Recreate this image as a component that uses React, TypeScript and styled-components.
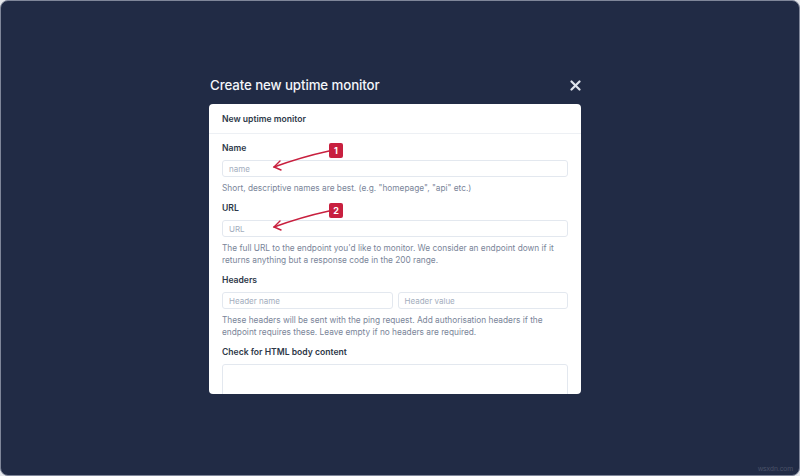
import React from "react";
import styled, { createGlobalStyle } from "styled-components";

const Global = createGlobalStyle`
  html, body { margin: 0; padding: 0; background: #e6e8ec; }
  body { font-family: "Inter", "Liberation Sans", sans-serif; }
  * { box-sizing: border-box; }
`;

const Screen = styled.div`
  position: relative;
  width: 800px;
  height: 476px;
  background: #212b45;
  border: 1px solid #7f8699;
  border-radius: 8px;
  overflow: hidden;
  display: flex;
  justify-content: center;
`;

const Modal = styled.div`
  width: 372px;
  margin-left: -10px;
  padding-top: 73px;
  display: flex;
  flex-direction: column;
`;

const TitleRow = styled.div`
  display: flex;
  align-items: center;
  justify-content: space-between;
  height: 22px;
  margin-bottom: 8px;
  padding-left: 1px;
`;

const Title = styled.h1`
  margin: 0;
  font-size: 13.3px;
  font-weight: 500;
  color: #f4f6fa;
  letter-spacing: -0.1px;
`;

const Close = styled.button`
  border: 0;
  background: none;
  padding: 0;
  width: 11px;
  height: 11px;
  display: flex;
`;

const Card = styled.div`
  position: relative;
  height: 290px;
  background: #ffffff;
  border-radius: 4px;
  overflow: hidden;
`;

const CardHeader = styled.div`
  height: 30px;
  display: flex;
  align-items: center;
  padding: 0 13px;
  border-bottom: 1px solid #edf0f4;
  font-size: 8.6px;
  font-weight: 600;
  color: #2d3748;
`;

const CardBody = styled.div`
  padding: 9px 13px 0;
`;

const Field = styled.div`
  margin-bottom: 9px;
`;

const Label = styled.div`
  font-size: 8.6px;
  line-height: 11px;
  font-weight: 600;
  color: #2d3748;
  margin-bottom: 6px;
`;

const Input = styled.div`
  height: 17px;
  border: 1px solid #e3e8ef;
  border-radius: 3px;
  padding-left: 6px;
  display: flex;
  align-items: center;
  font-size: 8px;
  color: #a3adbd;
  flex: 1;
`;

const TextArea = styled.div`
  height: 60px;
  border: 1px solid #e3e8ef;
  border-radius: 3px;
`;

const Pair = styled.div`
  display: flex;
  gap: 5px;
`;

const Help = styled.p`
  margin: 5px 0 0;
  font-size: 8.3px;
  line-height: 12px;
  color: #7a8599;
`;

const Badge = styled.div<{ $top: number }>`
  position: absolute;
  left: 120px;
  top: ${(p) => p.$top}px;
  width: 14px;
  height: 15px;
  border-radius: 2px;
  background: #c8203f;
  color: #fff;
  font-size: 9px;
  font-weight: 700;
  display: flex;
  align-items: center;
  justify-content: center;
`;

const Arrows = styled.svg`
  position: absolute;
  left: 0;
  top: 0;
  pointer-events: none;
`;

const Watermark = styled.div`
  position: absolute;
  right: 6px;
  bottom: 3px;
  font-size: 7px;
  color: #4a5268;
  font-family: "Liberation Sans", sans-serif;
`;

function Arrow({ y }: { y: number }) {
  const sx = 120;
  const sy = y + 8;
  const tx = 65;
  const ty = y + 24;
  return (
    <g stroke="#c8203f" strokeWidth={1.4} fill="none" strokeLinecap="round">
      <path d={`M ${sx} ${sy} Q ${(sx + tx) / 2} ${(sy + ty) / 2 - 2} ${tx} ${ty}`} />
      <path d={`M ${tx + 6} ${ty - 6} L ${tx} ${ty} L ${tx + 7} ${ty + 3}`} />
    </g>
  );
}

export default function App() {
  return (
    <>
      <Global />
      <Screen>
        <Modal>
          <TitleRow>
            <Title>Create new uptime monitor</Title>
            <Close aria-label="close">
              <svg width="11" height="11" viewBox="0 0 11 11">
                <path d="M1.5 1.5 L9.5 9.5 M9.5 1.5 L1.5 9.5" stroke="#dfe4ec" strokeWidth="2.2" strokeLinecap="round" />
              </svg>
            </Close>
          </TitleRow>
          <Card>
            <CardHeader>New uptime monitor</CardHeader>
            <CardBody>
              <Field>
                <Label>Name</Label>
                <Input>name</Input>
                <Help>Short, descriptive names are best. (e.g. "homepage", "api" etc.)</Help>
              </Field>
              <Field>
                <Label>URL</Label>
                <Input>URL</Input>
                <Help>
                  The full URL to the endpoint you'd like to monitor. We consider an endpoint down if it
                  <br />
                  returns anything but a response code in the 200 range.
                </Help>
              </Field>
              <Field>
                <Label>Headers</Label>
                <Pair>
                  <Input>Header name</Input>
                  <Input>Header value</Input>
                </Pair>
                <Help>
                  These headers will be sent with the ping request. Add authorisation headers if the
                  <br />
                  endpoint requires these. Leave empty if no headers are required.
                </Help>
              </Field>
              <Field>
                <Label>Check for HTML body content</Label>
                <TextArea />
              </Field>
            </CardBody>
            <Arrows width="372" height="290">
              <Arrow y={39} />
              <Arrow y={99} />
            </Arrows>
            <Badge $top={39}>1</Badge>
            <Badge $top={99}>2</Badge>
          </Card>
        </Modal>
        <Watermark>wsxdn.com</Watermark>
      </Screen>
    </>
  );
}
